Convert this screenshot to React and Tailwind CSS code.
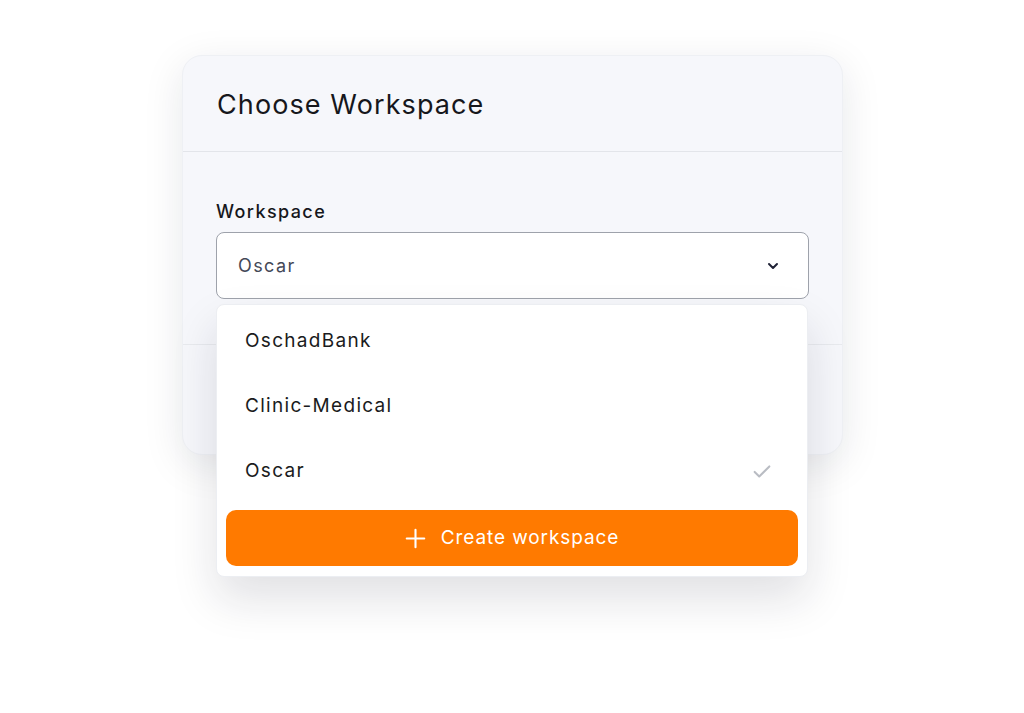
import React from "react";

const font = { fontFamily: "Inter, 'Noto Sans', sans-serif" };

export default function App() {
  return (
    <div className="min-h-[713px] w-[1024px] bg-white pt-[55px]" style={font}>
      <div className="relative ml-[182px] w-[661px]">
        <div className="h-[400px] rounded-[20px] bg-[#f6f7fb] shadow-[0_10px_40px_rgba(20,25,50,0.10)] border border-[#eef0f4] flex flex-col">
          <div className="h-[96px] flex items-center px-[34px] pt-[3px] border-b border-[#e3e5ea]">
            <h1 className="text-[27px] font-normal text-[#16171c] tracking-[1.1px]">Choose Workspace</h1>
          </div>
          <div className="px-[33px] pt-[47px] pb-[45px] border-b border-[#e8eaee]">
            <div className="text-[18px] font-medium text-[#16171c] mb-[7px] leading-[26px] tracking-[1.4px]">Workspace</div>
            <div className="h-[67px] rounded-[8px] border border-[#9ea2ab] bg-white flex items-center justify-between pl-[21px] pr-[27px]">
              <span className="text-[18px] text-[#444857] tracking-[1.4px]">Oscar</span>
              <svg width="16" height="16" viewBox="0 0 24 24" fill="none" stroke="#1f2236" strokeWidth="3" strokeLinecap="round" strokeLinejoin="round">
                <path d="M6 9l6 6 6-6" />
              </svg>
            </div>
          </div>
          <div className="flex-1" />
        </div>

        <div className="absolute left-[34px] top-[249px] w-[592px] h-[273px] rounded-[8px] bg-white border border-[#eceef2] shadow-[0_22px_45px_rgba(20,25,50,0.13)] flex flex-col pt-[4px] px-[9px] pb-[10px]">
          <div className="h-[65px] flex items-center pl-[19px] text-[19px] text-[#1a1b20] tracking-[1.3px]">OschadBank</div>
          <div className="h-[65px] flex items-center pl-[19px] text-[19px] text-[#1a1b20] tracking-[1.3px]">Clinic-Medical</div>
          <div className="h-[65px] flex items-center justify-between pl-[19px] pr-[25px] text-[19px] text-[#1a1b20] tracking-[1.3px]">
            <span>Oscar</span>
            <svg width="22" height="22" viewBox="0 0 24 24" fill="none" stroke="#b9bcc3" strokeWidth="2.2" strokeLinecap="round" strokeLinejoin="round">
              <path d="M4 13l5 5 11-11" />
            </svg>
          </div>
          <div className="mt-[7px] h-[56px] rounded-[10px] bg-[#ff7a00] flex items-center justify-center gap-[15px] text-white text-[19px] tracking-[0.9px]">
            <svg width="21" height="21" viewBox="0 0 24 24" fill="none" stroke="white" strokeWidth="2.4" strokeLinecap="round">
              <path d="M12 2v20M2 12h20" />
            </svg>
            <span>Create workspace</span>
          </div>
        </div>
      </div>
    </div>
  );
}
